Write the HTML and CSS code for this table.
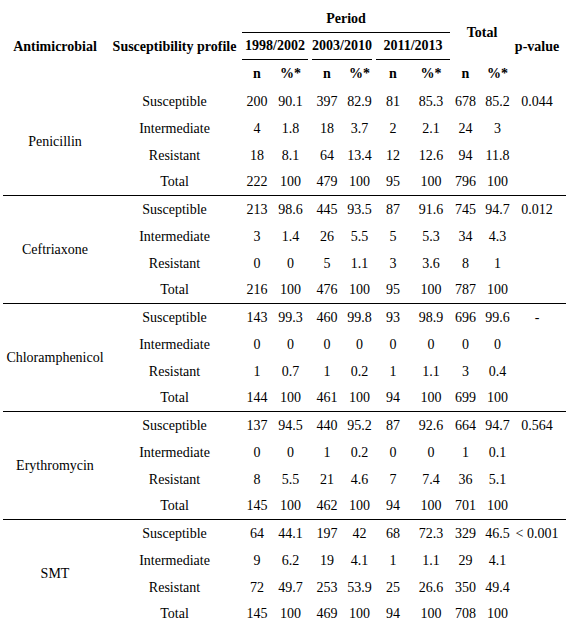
FILE: index.html
```html
<!DOCTYPE html>
<html lang="en">
<head>
    <meta charset="UTF-8">
    <title>Antimicrobial susceptibility</title>
    <link rel="stylesheet" href="styles.css">
</head>
<body>
    <table class="results">
        <colgroup>
            <col class="c-drug">
            <col class="c-profile">
            <col class="c-n1"><col class="c-p1">
            <col class="c-n2"><col class="c-p2">
            <col class="c-n3"><col class="c-p3">
            <col class="c-nt"><col class="c-pt">
            <col class="c-pval">
        </colgroup>
        <thead>
            <tr>
                <th rowspan="3">Antimicrobial</th>
                <th rowspan="3">Susceptibility profile</th>
                <th colspan="6" class="period">Period</th>
                <th colspan="2" rowspan="2">Total</th>
                <th rowspan="3" class="pval">p-value</th>
            </tr>
            <tr>
                <th colspan="2" class="year"><div class="year-line y1">1998/2002</div></th>
                <th colspan="2" class="year"><div class="year-line y2">2003/2010</div></th>
                <th colspan="2" class="year"><div class="year-line y3">2011/2013</div></th>
            </tr>
            <tr class="units">
                <th>n</th><th>%*</th>
                <th>n</th><th>%*</th>
                <th>n</th><th>%*</th>
                <th>n</th><th>%*</th>
            </tr>
        </thead>

        <!-- Penicillin -->
        <tbody class="block">
            <tr><td rowspan="4">Penicillin</td><td>Susceptible</td><td>200</td><td>90.1</td><td>397</td><td>82.9</td><td>81</td><td>85.3</td><td>678</td><td>85.2</td><td class="pval">0.044</td></tr>
            <tr><td>Intermediate</td><td>4</td><td>1.8</td><td>18</td><td>3.7</td><td>2</td><td>2.1</td><td>24</td><td>3</td><td class="pval"></td></tr>
            <tr><td>Resistant</td><td>18</td><td>8.1</td><td>64</td><td>13.4</td><td>12</td><td>12.6</td><td>94</td><td>11.8</td><td class="pval"></td></tr>
            <tr><td>Total</td><td>222</td><td>100</td><td>479</td><td>100</td><td>95</td><td>100</td><td>796</td><td>100</td><td class="pval"></td></tr>
        </tbody>

        <!-- Ceftriaxone -->
        <tbody class="block">
            <tr><td rowspan="4">Ceftriaxone</td><td>Susceptible</td><td>213</td><td>98.6</td><td>445</td><td>93.5</td><td>87</td><td>91.6</td><td>745</td><td>94.7</td><td class="pval">0.012</td></tr>
            <tr><td>Intermediate</td><td>3</td><td>1.4</td><td>26</td><td>5.5</td><td>5</td><td>5.3</td><td>34</td><td>4.3</td><td class="pval"></td></tr>
            <tr><td>Resistant</td><td>0</td><td>0</td><td>5</td><td>1.1</td><td>3</td><td>3.6</td><td>8</td><td>1</td><td class="pval"></td></tr>
            <tr><td>Total</td><td>216</td><td>100</td><td>476</td><td>100</td><td>95</td><td>100</td><td>787</td><td>100</td><td class="pval"></td></tr>
        </tbody>

        <!-- Chloramphenicol -->
        <tbody class="block">
            <tr><td rowspan="4">Chloramphenicol</td><td>Susceptible</td><td>143</td><td>99.3</td><td>460</td><td>99.8</td><td>93</td><td>98.9</td><td>696</td><td>99.6</td><td class="pval">-</td></tr>
            <tr><td>Intermediate</td><td>0</td><td>0</td><td>0</td><td>0</td><td>0</td><td>0</td><td>0</td><td>0</td><td class="pval"></td></tr>
            <tr><td>Resistant</td><td>1</td><td>0.7</td><td>1</td><td>0.2</td><td>1</td><td>1.1</td><td>3</td><td>0.4</td><td class="pval"></td></tr>
            <tr><td>Total</td><td>144</td><td>100</td><td>461</td><td>100</td><td>94</td><td>100</td><td>699</td><td>100</td><td class="pval"></td></tr>
        </tbody>

        <!-- Erythromycin -->
        <tbody class="block">
            <tr><td rowspan="4">Erythromycin</td><td>Susceptible</td><td>137</td><td>94.5</td><td>440</td><td>95.2</td><td>87</td><td>92.6</td><td>664</td><td>94.7</td><td class="pval">0.564</td></tr>
            <tr><td>Intermediate</td><td>0</td><td>0</td><td>1</td><td>0.2</td><td>0</td><td>0</td><td>1</td><td>0.1</td><td class="pval"></td></tr>
            <tr><td>Resistant</td><td>8</td><td>5.5</td><td>21</td><td>4.6</td><td>7</td><td>7.4</td><td>36</td><td>5.1</td><td class="pval"></td></tr>
            <tr><td>Total</td><td>145</td><td>100</td><td>462</td><td>100</td><td>94</td><td>100</td><td>701</td><td>100</td><td class="pval"></td></tr>
        </tbody>

        <!-- SMT -->
        <tbody class="block last">
            <tr><td rowspan="4">SMT</td><td>Susceptible</td><td>64</td><td>44.1</td><td>197</td><td>42</td><td>68</td><td>72.3</td><td>329</td><td>46.5</td><td class="pval">&lt; 0.001</td></tr>
            <tr><td>Intermediate</td><td>9</td><td>6.2</td><td>19</td><td>4.1</td><td>1</td><td>1.1</td><td>29</td><td>4.1</td><td class="pval"></td></tr>
            <tr><td>Resistant</td><td>72</td><td>49.7</td><td>253</td><td>53.9</td><td>25</td><td>26.6</td><td>350</td><td>49.4</td><td class="pval"></td></tr>
            <tr><td>Total</td><td>145</td><td>100</td><td>469</td><td>100</td><td>94</td><td>100</td><td>708</td><td>100</td><td class="pval"></td></tr>
        </tbody>
    </table>
</body>
</html>
```

FILE: styles.css
```css
body {
    margin: 5px 3px;
    background: #fff;
    color: #000;
    font-family: "Liberation Serif", "Times New Roman", serif;
    font-size: 14px;
}

.results {
    width: 563px;
    table-layout: fixed;
    border-collapse: collapse;
}

/* column widths */
.c-drug { width: 104px; }
.c-profile { width: 135px; }
.c-n1 { width: 30px; }
.c-p1 { width: 37px; }
.c-n2 { width: 36px; }
.c-p2 { width: 29px; }
.c-n3 { width: 38px; }
.c-p3 { width: 38px; }
.c-nt { width: 31px; }
.c-pt { width: 33px; }
.c-pval { width: 52px; }

.results th,
.results td {
    height: 27px;
    padding: 0;
    text-align: center;
    vertical-align: middle;
    white-space: nowrap;
    line-height: 27px;
}

.results th {
    font-weight: bold;
}

.results .units th {
    height: 28px;
    line-height: 28px;
}

.results th.period {
    border-bottom: 1px solid #000;
    line-height: 26px;
}

/* year sub-headers have their own short rules */
.year-line {
    border-bottom: 1px solid #000;
    line-height: 26px;
}
.y1 { margin: 0 1px 0 0; }
.y2 { margin: 0 2px 0 3px; }
.y3 { margin: 0 0 0 2px; }

.results .pval {
    padding-right: 6px;
}

/* rule under each antimicrobial */
.block tr:last-child td {
    height: 26px;
    line-height: 26px;
    border-bottom: 1px solid #000;
}
.block tr:first-child td:first-child {
    border-bottom: 1px solid #000;
}
.block.last tr:last-child td,
.block.last tr:first-child td:first-child {
    border-bottom: none;
}
```
